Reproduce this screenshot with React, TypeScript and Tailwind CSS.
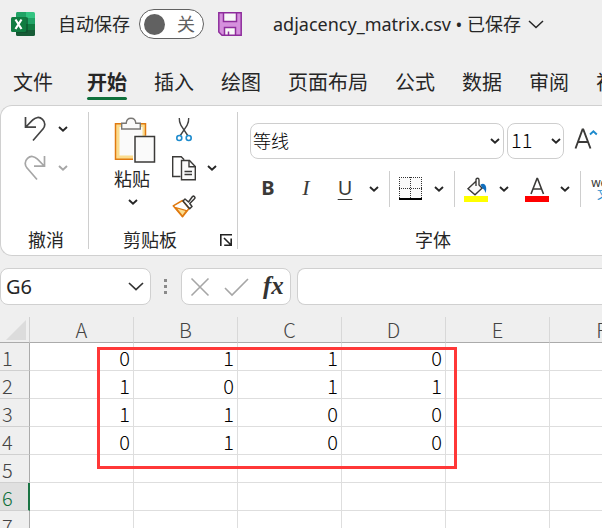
import React from 'react';

const UI = 'font-["Noto_Sans","Noto_Sans_CJK_SC",sans-serif]';
const LIGHT = 'font-["Noto_Sans_CJK_SC",sans-serif] font-light';

const tabs = ['开始', '插入', '绘图', '页面布局', '公式', '数据', '审阅', '视图'];
const columns = ['A', 'B', 'C', 'D', 'E', 'F'];
const rows = [
  ['0', '1', '1', '0'],
  ['1', '0', '1', '1'],
  ['1', '1', '0', '0'],
  ['0', '1', '0', '0'],
  [],
  [],
  [],
];

function Caret({ className = '' }: { className?: string }) {
  return (
    <svg className={`shrink-0 ${className}`} width="10" height="6" viewBox="0 0 10 6" fill="none" stroke="currentColor" strokeWidth="1.900">
      <path d="M1 1l4 3.700L9 1" />
    </svg>
  );
}

function CaretButton({ label, className = '', disabled = false }: { label: string; className?: string; disabled?: boolean }) {
  return (
    <button aria-label={label} disabled={disabled} className={`flex h-6 w-[10px] shrink-0 items-center ${className}`}>
      <Caret />
    </button>
  );
}

function Divider() {
  return <div className="w-px shrink-0 self-stretch bg-[#cecece]" />;
}

function ExcelLogo() {
  return (
    <svg width="24" height="24" viewBox="0 0 24 24" aria-label="Excel" role="img">
      <path d="M6 0h9v6H5V1.500Q5 0 6 0z" fill="#21a366" />
      <path d="M15 0h7.500Q24 0 24 1.500V6h-9z" fill="#33c481" />
      <path d="M5 6h10v6H5z" fill="#107c41" />
      <path d="M15 6h9v6h-9z" fill="#21a366" />
      <path d="M5 12h10v6H5z" fill="#185c37" />
      <path d="M15 12h9v6h-9z" fill="#107c41" />
      <path d="M5 18h19v4.500Q24 24 22.500 24h-16Q5 24 5 22.500z" fill="#185c37" />
      <path d="M5 5h10.500Q17 5 17 6.500v12.500Q17 21 15 21H5z" fill="#0b4f2a" opacity=".6" />
      <rect x="0" y="5" width="15" height="15" rx="1.500" fill="#107c41" />
      <path d="M4.500 7.500l6 9.500M10.500 7.500l-6 9.500" stroke="#fff" strokeWidth="2.200" />
    </svg>
  );
}

function SaveIcon() {
  return (
    <svg width="24" height="24" viewBox="0 0 24 24" fill="none" stroke="#8e2d9c" strokeWidth="1.500">
      <path d="M.8.8h22.400v22.400H4L.8 20z" fill="#d590dd" />
      <path d="M5.500.8h13v8.700h-13z" fill="#f7f7f7" />
      <path d="M6.500 23.200v-7.700h11v7.700z" fill="#f7f7f7" />
      <path d="M10.500 23v-3.500" />
    </svg>
  );
}

function UndoIcon({ className = '' }: { className?: string }) {
  return (
    <svg className={className} width="24" height="26" viewBox="0 0 24 26" fill="none" stroke="currentColor" strokeWidth="1.700">
      <path d="M2.500 1v10.200H13M2.800 11L9.500 4.200C12.500 1 16.500.5 19.500 3.300s3 7.200.2 10L10 24.500" />
    </svg>
  );
}

function PasteIcon() {
  return (
    <svg width="42" height="46" viewBox="0 0 42 46" fill="none">
      <path d="M2 7h29v35H2z" fill="#fbdc8e" />
      <path d="M5.500 10h23v28.500h-23z" fill="#fafafa" />
      <path d="M8 6.800H1.500v35.400H19M25 6.800h6.500v12" stroke="#e07a10" strokeWidth="1.500" />
      <path d="M19 17h5v27h-5z" fill="#fff" />
      <path d="M7.700 12V6.300h4.500Q12.500 1.300 17 1.300t4.800 5h4.500V12z" fill="#fafafa" stroke="#797774" strokeWidth="1.400" />
      <path d="M21 19.500h19.500V45H21z" fill="#fafafa" stroke="#3b3a38" strokeWidth="1.500" />
    </svg>
  );
}

function ScissorsIcon() {
  return (
    <svg width="16" height="25" viewBox="0 0 16 25" fill="none">
      <path d="M3.300 1Q3 4 5 8.500l6.700 10M12.700 1Q13 4 11 8.500l-6.700 10" stroke="#444" strokeWidth="1.400" />
      <circle cx="3.300" cy="21" r="2.500" stroke="#1e8bcd" strokeWidth="1.600" />
      <circle cx="12.700" cy="21" r="2.500" stroke="#1e8bcd" strokeWidth="1.600" />
    </svg>
  );
}

function CopyIcon() {
  return (
    <svg width="24" height="25" viewBox="0 0 24 25" fill="none" stroke="#3b3a38" strokeWidth="1.400">
      <path d="M8.500 20.500H.7V.8h8.500l3 3" />
      <path d="M9.500 4.500h8l5.800 6v13.300H9.500z" fill="#fafafa" />
      <path d="M17 4.800v6h6M12.500 15.500h7.500M12.500 18.500h7.500" />
    </svg>
  );
}

function BrushIcon() {
  return (
    <svg width="24" height="23" viewBox="0 0 24 23" fill="none" strokeWidth="1.500">
      <path d="M10.500 5.500L1.200 10.800 10.500 21.800l6.500-8.300z" fill="#fff" stroke="#e07a10" strokeLinejoin="round" />
      <path d="M3.500 12.500l11 3.200-4 5.500z" fill="#fbdc8e" stroke="#e07a10" strokeWidth="1.200" />
      <path d="M11 6l2-2 3.500 3 4-5.500q1-.8 2 .2t0 2L17.800 8.500l2.200 3-2.300 2.300z" fill="#fff" stroke="#3b3a38" strokeLinejoin="round" />
    </svg>
  );
}

function BordersIcon() {
  return (
    <svg width="24" height="24" viewBox="0 0 24 24" fill="none" stroke="#333">
      <path d="M1 1h22v20H1z" fill="#fafafa" stroke="none" />
      <path d="M0 .5h23M0 11.500h23" strokeDasharray="1 1" />
      <path d="M.5 0v21M11.500 0v21M22.500 0v21" strokeDasharray="1 1" />
      <path d="M0 22h23" stroke="#000" strokeWidth="2" />
    </svg>
  );
}

function FillIcon() {
  return (
    <svg width="24" height="25" viewBox="0 0 24 25" fill="none">
      <path d="M4.500 11.500L11 5.200l8 6.300-8 6.300z" fill="#fafafa" />
      <path d="M12.500 3.800L4 11.700l7 6 8.300-7.700M12 9V3q0-1.700 1.500-1.700T15 3v5l3.500 3.500" stroke="#3b3a38" strokeWidth="1.400" />
      <path d="M16.500 7.500q3.500-2 5 1t0 7.500q-.5-3.500-3.300-5z" fill="#106ebe" />
      <path d="M0 19h24v6H0z" fill="#ff0" />
    </svg>
  );
}

function FontColorIcon() {
  return (
    <svg width="24" height="25" viewBox="0 0 24 25" fill="none">
      <path d="M6 17L12 1.500h.5L18.500 17M8 12h8.500" stroke="#3b3a38" strokeWidth="1.600" />
      <path d="M0 19h24v6H0z" fill="#f00" />
    </svg>
  );
}

function GrowFontIcon() {
  return (
    <svg width="24" height="22" viewBox="0 0 24 22" fill="none">
      <path d="M1.500 20.500L8.500 1.500h.8L16.500 20.500M4 14h10" stroke="#3b3a38" strokeWidth="1.900" />
      <path d="M16 6.500l3.400-3.300L22.800 6.500" stroke="#1e8bcd" strokeWidth="1.900" />
    </svg>
  );
}

function LauncherIcon() {
  return (
    <svg width="13" height="13" viewBox="0 0 13 13" fill="none" stroke="#222" strokeWidth="1.600">
      <path d="M.8 12V.8H12M4 4l7 7M11.200 4.500v6.700h-7" />
    </svg>
  );
}

export default function App() {
  return (
    <div className={`flex h-screen flex-col overflow-hidden bg-[#efefef] text-[18px] leading-6 text-[#262626] ${UI}`}>
      <header className="flex h-12 shrink-0 items-center whitespace-nowrap pl-[11px]">
        <ExcelLogo />
        <label className="ml-[23px] flex items-center gap-[9px]">
          自动保存
          <input type="checkbox" role="switch" className="peer sr-only" />
          <span className="flex h-[30px] w-[65px] items-center justify-between rounded-full border border-[#616161] bg-white pl-1 pr-2 text-[#616161]">
            <span className="size-[21px] rounded-full bg-[#616161]" />
            关
          </span>
        </label>
        <button aria-label="保存" className="ml-[14px]">
          <SaveIcon />
        </button>
        <button className="ml-[31px] flex items-center gap-[7px]">
          adjacency_matrix.csv • 已保存
          <svg width="16" height="9" viewBox="0 0 16 9" fill="none" stroke="currentColor" strokeWidth="1.500">
            <path d="M1 1l7 6.500L15 1" />
          </svg>
        </button>
      </header>

      <nav className="flex h-[57px] shrink-0 gap-[27px] whitespace-nowrap pl-[13px] pt-[19px] text-[20px] leading-8">
        <button className="mr-[7px] h-8 shrink-0">文件</button>
        {tabs.map((tab, i) => (
          <button
            key={tab}
            className={i === 0 ? 'flex h-[34px] shrink-0 flex-col font-bold' : 'h-8 shrink-0'}
          >
            {tab}
            {i === 0 && <span className="-mt-[2px] h-[3px] w-full rounded-full bg-[#0f703b]" />}
          </button>
        ))}
      </nav>

      <section aria-label="功能区" className="flex h-[151px] shrink-0 overflow-hidden rounded-l-xl border border-r-0 border-[#d0d0d0] bg-white py-[6px]">
        <div className="flex w-[87px] shrink-0 flex-col justify-between pb-px pl-[22px]">
          <div className="flex flex-col gap-[13px] pt-1">
            <div className="flex items-center gap-[11px]">
              <button aria-label="撤消" className="text-[#444]"><UndoIcon /></button>
              <CaretButton label="撤消选项" />
            </div>
            <div className="flex items-center gap-[11px] text-[#a6a6a6]">
              <button aria-label="恢复" disabled><UndoIcon className="-scale-x-100" /></button>
              <CaretButton label="恢复选项" disabled />
            </div>
          </div>
          <div className="pl-[5px] leading-4">撤消</div>
        </div>
        <Divider />

        <div className="flex w-[148px] shrink-0 flex-col justify-between pb-px pl-[25px]">
          <div className="flex">
            <button className="flex w-[42px] flex-col items-start pt-[5px]">
              <PasteIcon />
              <span className="mt-1 whitespace-nowrap">粘贴</span>
              <Caret className="ml-[14px] mt-2" />
            </button>
            <div className="ml-4 flex flex-col pt-1">
              <button aria-label="剪切" className="flex h-[27px] w-6 items-center justify-center"><ScissorsIcon /></button>
              <div className="mt-[13px] flex h-6 items-center gap-[11px]">
                <button aria-label="复制"><CopyIcon /></button>
                <CaretButton label="复制选项" />
              </div>
              <button aria-label="格式刷" className="mt-[15px] w-6"><BrushIcon /></button>
            </div>
          </div>
          <div className="flex items-center justify-between pl-[9px] pr-1 leading-4">
            剪贴板
            <button aria-label="剪贴板设置"><LauncherIcon /></button>
          </div>
        </div>
        <Divider />

        <div className="flex w-[390px] shrink-0 flex-col justify-between pb-px">
          <div className="flex flex-col gap-3 pl-3 pt-[11px]">
            <div className="flex h-9 items-center">
              <div className="relative">
                <select aria-label="字体" className={`h-9 w-[254px] appearance-none rounded-lg border border-[#cecece] bg-white pb-[2px] pl-[2px] text-black ${LIGHT}`}>
                  <option>等线</option>
                </select>
                <Caret className="pointer-events-none absolute right-[4px] top-[15px]" />
              </div>
              <div className="relative ml-[3px]">
                <select aria-label="字号" className={`h-9 w-[57px] appearance-none rounded-lg border border-[#cecece] bg-white pb-[2px] pl-[3px] text-[20px] text-black ${LIGHT}`}>
                  <option>11</option>
                </select>
                <Caret className="pointer-events-none absolute right-[3px] top-[15px]" />
              </div>
              <button aria-label="增大字号" className="ml-[10px] pb-1"><GrowFontIcon /></button>
            </div>
            <div className="flex h-9 items-center text-[20px] text-[#3b3a38]">
              <button aria-label="加粗" className="ml-[10px] w-4 pb-[2px] text-center font-bold">B</button>
              <button aria-label="倾斜" className='ml-[22px] w-4 pb-[2px] text-center font-["Liberation_Serif",serif] text-[22px] italic'>I</button>
              <button aria-label="下划线" className="ml-[23px] w-4 pb-[2px] text-center underline decoration-1 underline-offset-4">U</button>
              <CaretButton label="下划线选项" className="ml-[16px] text-[#262626]" />
              <div className="ml-[10px] flex h-9"><Divider /></div>
              <button aria-label="边框" className="ml-[9px]"><BordersIcon /></button>
              <CaretButton label="边框选项" className="ml-[11px] text-[#262626]" />
              <div className="ml-[10px] flex h-9"><Divider /></div>
              <button aria-label="填充颜色" className="ml-[9px]"><FillIcon /></button>
              <CaretButton label="填充颜色选项" className="ml-[11px] text-[#262626]" />
              <button aria-label="字体颜色" className="ml-[16px]"><FontColorIcon /></button>
              <CaretButton label="字体颜色选项" className="ml-[11px] text-[#262626]" />
              <div className="ml-[10px] flex h-9"><Divider /></div>
              <button aria-label="拼音指南" className="ml-[10px] flex w-6 shrink-0 flex-col items-center text-[12px] leading-3">
                <span>wén</span>
                <span className="text-[#1e8bcd]">文</span>
              </button>
            </div>
          </div>
          <div className="text-center leading-4">字体</div>
        </div>
      </section>

      <section aria-label="编辑栏" className="mt-3 flex h-[37px] shrink-0 items-center text-[20px]">
        <div className="relative h-full">
          <input aria-label="名称框" defaultValue="G6" className="h-full w-[151px] rounded-lg border border-[#d0d0d0] bg-white pl-[5px] outline-none" />
          <svg className="pointer-events-none absolute right-[7px] top-[14px]" width="16" height="9" viewBox="0 0 16 9" fill="none" stroke="#333" strokeWidth="1.700">
            <path d="M1 1l7 6.500L15 1" />
          </svg>
        </div>
        <div className="ml-[13px] flex flex-col gap-[3px]">
          <span className="size-[3px] bg-[#8a8a8a]" />
          <span className="size-[3px] bg-[#8a8a8a]" />
          <span className="size-[3px] bg-[#8a8a8a]" />
        </div>
        <div className="ml-[14px] flex h-full w-[110px] shrink-0 items-center rounded-lg border border-[#d0d0d0] bg-white pl-2 text-[#a6a6a6]">
          <button aria-label="取消">
            <svg width="20" height="20" viewBox="0 0 20 20" fill="none" stroke="currentColor" strokeWidth="1.600"><path d="M1.500 1.500l17 17M18.500 1.500l-17 17" /></svg>
          </button>
          <button aria-label="输入" className="ml-[14px]">
            <svg width="25" height="20" viewBox="0 0 25 20" fill="none" stroke="currentColor" strokeWidth="1.600"><path d="M1 11l7 7L24 2" /></svg>
          </button>
          <button aria-label="插入函数" className='ml-[14px] pb-[2px] font-["Liberation_Serif",serif] text-[25px] font-bold italic text-[#333]'>fx</button>
        </div>
        <input aria-label="编辑栏" className="ml-[6px] h-full min-w-0 flex-1 rounded-l-lg border border-r-0 border-[#d0d0d0] bg-white px-2 outline-none" />
      </section>

      <main className="relative mt-3 min-h-0 flex-1 overflow-hidden">
        <table className={`w-0 table-fixed border-separate border-spacing-0 text-[20px] leading-6 ${LIGHT}`}>
          <colgroup>
            <col className="w-[30px]" />
            {columns.map((c) => (
              <col key={c} className="w-[104px]" />
            ))}
          </colgroup>
          <thead>
            <tr className="h-[26px] text-[#444]">
              <th aria-label="全选" className="border-b border-r border-b-[#ababab] border-r-[#d0d0d0] p-0">
                <svg className="ml-[6px]" width="20" height="20" viewBox="0 0 20 20"><path d="M20 0v20H0z" fill="#dcdcdc" /></svg>
              </th>
              {columns.map((c) => (
                <th key={c} scope="col" className="border-b border-r border-b-[#ababab] border-r-[#d8d8d8] p-0 pt-px font-light">
                  {c}
                </th>
              ))}
            </tr>
          </thead>
          <tbody>
            {rows.map((row, r) => (
              <tr key={r} className="h-7">
                <th
                  scope="row"
                  className={
                    r === 5
                      ? 'border-b border-r-2 border-b-[#d0d0d0] border-r-[#1a7343] bg-[#e0e0e0] p-0 pl-[2px] pt-[2px] text-left font-light text-[#0f703b]'
                      : 'border-b border-r border-b-[#d0d0d0] border-r-[#ababab] p-0 pl-[2px] pt-[2px] text-left font-light text-[#444]'
                  }
                >
                  {r + 1}
                </th>
                {columns.map((c, i) => (
                  <td key={c} className="border-b border-r border-[#dedede] bg-white p-0 pr-[3px] pt-[2px] text-right text-black">
                    {row[i]}
                  </td>
                ))}
              </tr>
            ))}
          </tbody>
        </table>
        <div className="pointer-events-none absolute left-[97px] top-[30px] h-[122px] w-[360px] border-3 border-[#ff3838]" />
      </main>
    </div>
  );
}
